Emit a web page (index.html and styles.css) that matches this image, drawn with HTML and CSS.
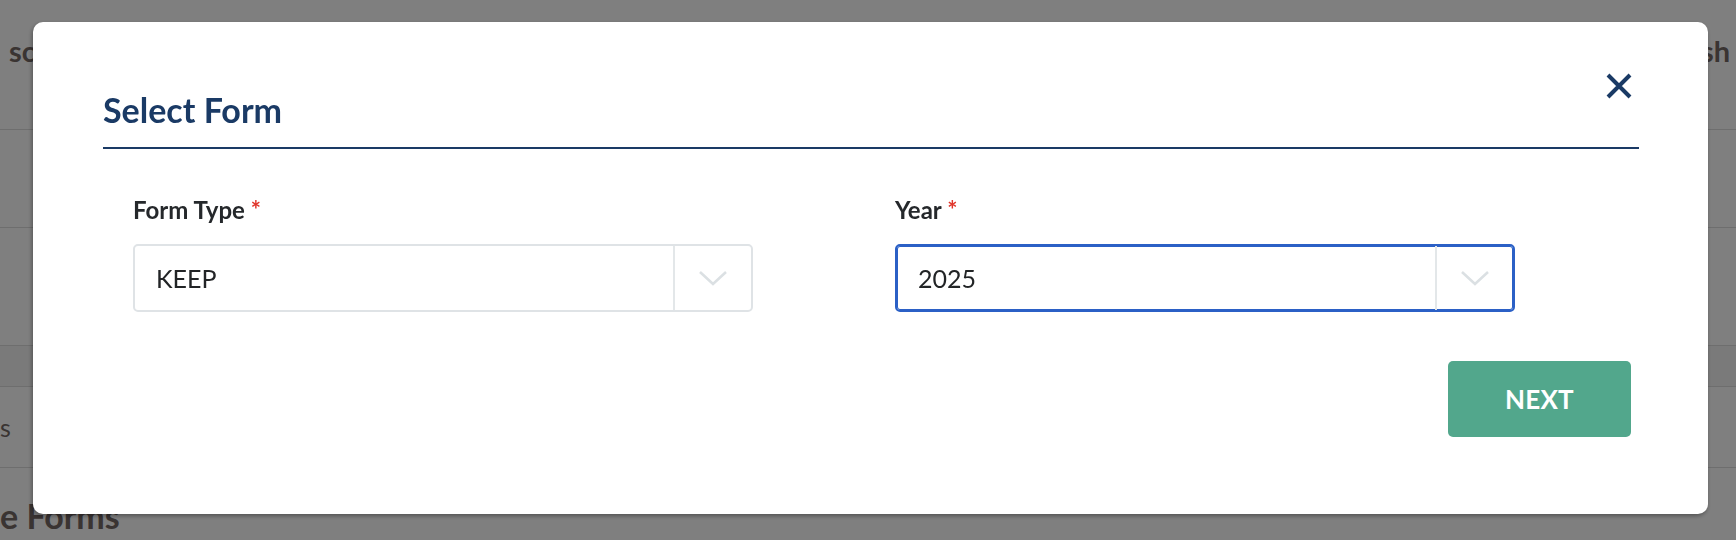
FILE: index.html
```html
<!DOCTYPE html>
<html lang="en">
<head>
<meta charset="utf-8">
<title>Select Form</title>
<link rel="stylesheet" href="styles.css">
</head>
<body>
  <div class="page">
    <header class="topbar">
      <span class="topbar-title">schedule</span>
      <span class="topbar-action">Refresh</span>
    </header>
    <div class="row row-a"></div>
    <div class="row row-b"></div>
    <div class="row row-head"></div>
    <div class="row row-c"><span class="row-text">s</span></div>
    <h2 class="section-title">e Forms</h2>
  </div>

  <div class="overlay">
    <div class="modal" role="dialog" aria-labelledby="modal-title">
      <div class="modal-header">
        <h1 class="modal-title" id="modal-title">Select Form</h1>
        <button class="close" type="button" aria-label="Close">
          <svg width="28" height="28" viewBox="0 0 28 28" aria-hidden="true">
            <path d="M3 3 L25 25 M25 3 L3 25" stroke="#1a3a65" stroke-width="4" fill="none"/>
          </svg>
        </button>
      </div>

      <div class="fields">
        <div class="field">
          <div class="label">Form Type <span class="required">*</span></div>
          <div class="select">
            <div class="select-value">KEEP</div>
            <div class="select-indicator">
              <svg width="30" height="17" viewBox="0 0 30 17" aria-hidden="true">
                <path d="M2 2 L15 14 L28 2" stroke="#dbe0e3" stroke-width="2.6" fill="none"/>
              </svg>
            </div>
          </div>
        </div>
        <div class="field">
          <div class="label">Year <span class="required">*</span></div>
          <div class="select is-focused">
            <div class="select-value">2025</div>
            <div class="select-indicator">
              <svg width="30" height="17" viewBox="0 0 30 17" aria-hidden="true">
                <path d="M2 2 L15 14 L28 2" stroke="#dbe0e3" stroke-width="2.6" fill="none"/>
              </svg>
            </div>
          </div>
        </div>
      </div>

      <div class="actions">
        <button class="btn-next" type="button">NEXT</button>
      </div>
    </div>
  </div>
</body>
</html>
```

FILE: styles.css
```css
* {
  box-sizing: border-box;
}

html, body {
  margin: 0;
  padding: 0;
}

body {
  font-family: Lato, "Liberation Sans", sans-serif;
  background: #ffffff;
}

/* underlying page */
.page {
  width: 1736px;
  height: 540px;
  overflow: hidden;
  color: #746865;
}

.topbar {
  height: 130px;
  border-bottom: 1px solid #dcdcdc;
  display: flex;
  justify-content: space-between;
  align-items: flex-start;
  padding: 34px 6px 0 9px;
  font-size: 29px;
  font-weight: 700;
  line-height: 34px;
}

.row {
  border-bottom: 1px solid #dcdcdc;
}

.row-a { height: 98px; }
.row-b { height: 118px; }
.row-head { height: 41px; background: #f4f4f4; }

.row-c {
  height: 81px;
  display: flex;
  align-items: center;
  font-size: 25px;
}

.row-text {
  margin-left: 0;
}

.section-title {
  margin: 28px 0 0;
  font-size: 34px;
  font-weight: 700;
  line-height: 40px;
}

/* modal */
.overlay {
  position: fixed;
  inset: 0;
  background: rgba(0, 0, 0, 0.5);
  padding: 22px 28px 0 33px;
}

.modal {
  height: 492px;
  background: #ffffff;
  border-radius: 10px;
  box-shadow: -1px 2px 4px rgba(0, 0, 0, 0.35);
  padding: 50px 69px 0 70px;
}

.modal-header {
  display: flex;
  justify-content: space-between;
  align-items: flex-start;
  border-bottom: 2px solid #1a3a65;
  padding-bottom: 17px;
}

.modal-title {
  margin: 18px 0 0;
  font-size: 34px;
  font-weight: 700;
  line-height: 40px;
  color: #1a3a65;
}

.close {
  width: 28px;
  height: 28px;
  margin-right: 6px;
  padding: 0;
  border: 0;
  background: none;
  display: block;
}

.close svg {
  display: block;
}

.fields {
  display: flex;
  gap: 142px;
  padding: 0 30px;
  margin-top: 47px;
}

.field {
  width: 620px;
}

.label {
  font-size: 24px;
  font-weight: 700;
  line-height: 28px;
  color: #25282b;
  margin-bottom: 20px;
}

.required {
  color: #e0352b;
}

.select {
  height: 68px;
  display: flex;
  border: 2px solid #dfe3e6;
  border-radius: 5px;
  background: #fff;
}

.select.is-focused {
  border-color: #2b60c6;
  box-shadow: inset 0 0 0 1px #2b60c6;
}

.select-value {
  flex: 1;
  display: flex;
  align-items: center;
  padding-left: 21px;
  font-size: 25px;
  color: #222426;
}

.select-indicator {
  width: 78px;
  border-left: 2px solid #e3e7e9;
  display: flex;
  align-items: center;
  justify-content: center;
}

.select-indicator svg {
  display: block;
}

.actions {
  display: flex;
  justify-content: flex-end;
  margin-top: 49px;
  padding-right: 8px;
}

.btn-next {
  width: 183px;
  height: 76px;
  border: 0;
  border-radius: 5px;
  background: #52a78c;
  color: #ffffff;
  font-family: inherit;
  font-size: 26px;
  font-weight: 700;
  letter-spacing: 0.2px;
}
```
